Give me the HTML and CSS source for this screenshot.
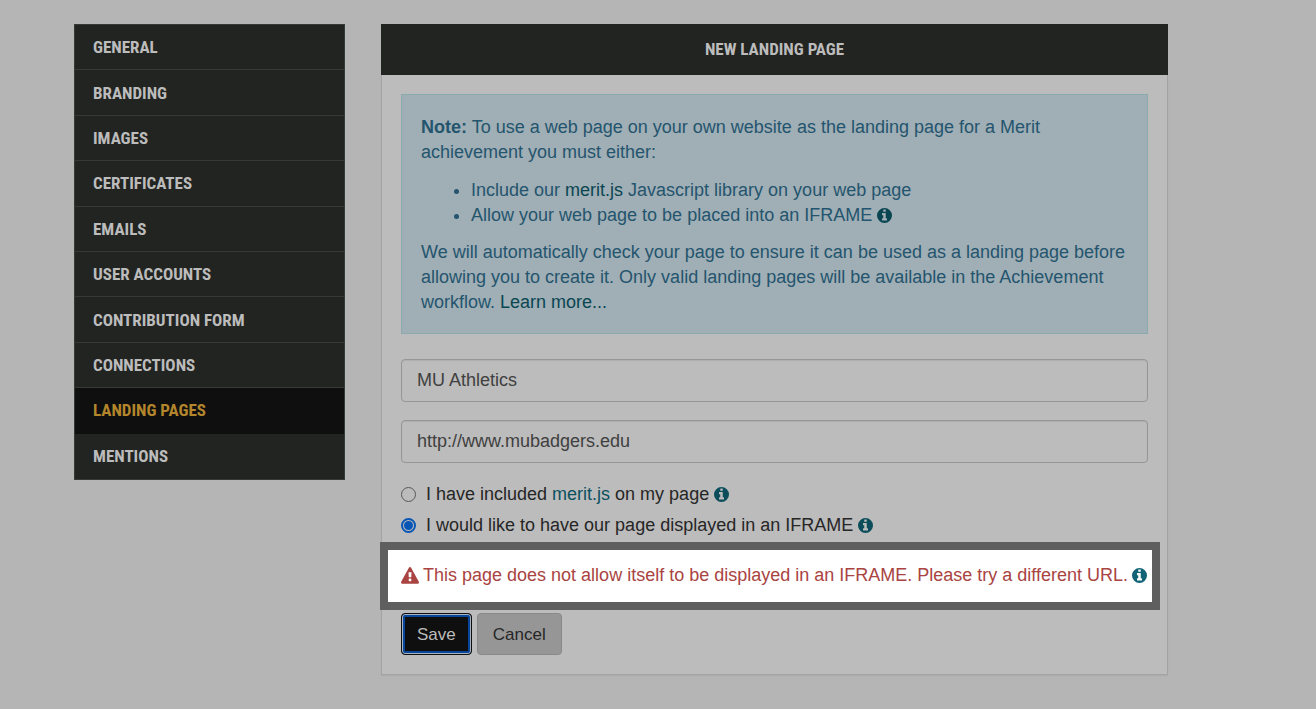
FILE: index.html
```html
<!DOCTYPE html>
<html lang="en">
<head>
    <meta charset="UTF-8">
    <meta name="viewport" content="width=device-width, initial-scale=1.0">
    <title>New Landing Page</title>
    <link rel="stylesheet" href="styles.css">
</head>
<body>
    <svg class="sprite" aria-hidden="true">
        <symbol id="info" viewBox="128 128 1536 1536">
            <path fill-rule="evenodd" d="M896 128a768 768 0 1 0 0 1536a768 768 0 1 0 0-1536zM1152 1376q0 32-32 32H672q-32 0-32-32v-160q0-32 32-32h96V864h-96q-32 0-32-32V672q0-32 32-32h320q32 0 32 32v512h96q32 0 32 32zM1024 480q0 32-32 32H800q-32 0-32-32V320q0-32 32-32h192q32 0 32 32z"/>
        </symbol>
        <symbol id="warning" viewBox="0 0 1792 1792">
            <path d="M1024 1375v-190q0-14-9.500-23.500t-22.500-9.500h-192q-13 0-22.500 9.500t-9.500 23.500v190q0 14 9.500 23.500t22.500 9.500h192q13 0 22.500-9.500t9.500-23.500zm-2-374l18-459q0-12-10-19-13-11-24-11h-220q-11 0-24 11-10 7-10 21l17 457q0 10 10 16.500t24 6.500h185q14 0 23.500-6.500t10.500-16.500zm-14-934l768 1408q35 63-2 126-17 29-46.500 46t-63.500 17h-1536q-34 0-63.500-17t-46.500-46q-37-63-2-126l768-1408q17-31 47-49t65-18 65 18 47 49z"/>
        </symbol>
    </svg>

    <div class="page">
        <nav class="menu">
            <a href="#">GENERAL</a>
            <a href="#">BRANDING</a>
            <a href="#">IMAGES</a>
            <a href="#">CERTIFICATES</a>
            <a href="#">EMAILS</a>
            <a href="#">USER ACCOUNTS</a>
            <a href="#">CONTRIBUTION FORM</a>
            <a href="#">CONNECTIONS</a>
            <a href="#" class="active">LANDING PAGES</a>
            <a href="#">MENTIONS</a>
        </nav>

        <main class="panel">
            <h1>NEW LANDING PAGE</h1>
            <form class="panel-body">
                <div class="note">
                    <p><strong>Note:</strong> To use a web page on your own website as the landing page for a Merit achievement you must either:</p>
                    <ul>
                        <li>Include our <a href="#">merit.js</a> Javascript library on your web page</li>
                        <li>Allow your web page to be placed into an IFRAME <svg class="icon"><use href="#info"/></svg></li>
                    </ul>
                    <p>We will automatically check your page to ensure it can be used as a landing page before allowing you to create it. Only valid landing pages will be available in the Achievement workflow. <a href="#">Learn more...</a></p>
                </div>

                <input type="text" class="field" aria-label="Name" value="MU Athletics">
                <input type="text" class="field" aria-label="URL" value="http://www.mubadgers.edu">

                <div class="choice">
                    <input type="radio" name="method" id="script">
                    <label for="script">I have included <a href="#">merit.js</a> on my page <svg class="icon"><use href="#info"/></svg></label>
                </div>
                <div class="choice">
                    <input type="radio" name="method" id="iframe" checked>
                    <label for="iframe">I would like to have our page displayed in an IFRAME <svg class="icon"><use href="#info"/></svg></label>
                </div>

                <div class="error">
                    <svg class="icon-warning"><use href="#warning"/></svg>
                    <span>This page does not allow itself to be displayed in an IFRAME. Please try a different URL.</span>
                    <svg class="icon"><use href="#info"/></svg>
                </div>

                <div class="actions">
                    <button type="button" class="button save">Save</button>
                    <button type="button" class="button">Cancel</button>
                </div>
            </form>
        </main>
    </div>
</body>
</html>
```
FILE: styles.css
```css
* {
    box-sizing: border-box;
}
body {
    margin: 0;
    font-family: "Liberation Sans", Arial, sans-serif;
    font-size: 18px;
    line-height: 25px;
    background: #b5b5b5;
    color: #262626;
}
a {
    color: #0b5060;
    text-decoration: none;
}
.sprite {
    display: none;
}
.page {
    display: grid;
    grid-template-columns: 271px 1fr;
    align-items: start;
    gap: 36px;
    padding: 24px 148px 24px 74px;
}
.menu,
.panel h1 {
    font-family: "Liberation Sans Narrow", "Roboto Condensed", "Arial Narrow", sans-serif;
    font-size: 17px;
    font-weight: bold;
}
.menu {
    display: grid;
    grid-auto-rows: 1fr;
    min-height: 456px;
    background: #222421;
    border: 1px solid #343a35;
}
.menu a {
    display: flex;
    align-items: center;
    padding: 1px 18px 0;
    color: #bcbcbc;
    border-bottom: 1px solid #343a35;
}
.menu a:last-child {
    border-bottom: none;
}
.menu a.active {
    background: #0f0f0f;
    color: #b4862c;
    border-color: #0f0f0f;
}
.panel h1 {
    margin: 0;
    padding: 13px;
    text-align: center;
    background: #222421;
    color: #bcbcbc;
}
.panel-body {
    padding: 19px;
    background: #bcbcbc;
    border: 1px solid #a3a3a3;
    border-top: none;
    box-shadow: 0 1px 1px #adadad;
}
.note {
    margin-bottom: 25px;
    padding: 20px 19px 18px;
    background: #a0aeb5;
    border: 1px solid #8aabae;
    color: #24556e;
}
.note p {
    margin: 0;
}
.note ul {
    margin: 13px 0 12px;
    padding-left: 50px;
}
.note a,
.note .icon {
    color: #094652;
}
.icon,
.icon-warning {
    width: 15px;
    height: 15px;
    vertical-align: -2px;
    fill: currentColor;
    color: #0b4d5b;
}
.field {
    display: block;
    width: 100%;
    height: 43px;
    margin-bottom: 18px;
    padding: 0 15px;
    font: inherit;
    color: #404040;
    background: #bcbcbc;
    border: 1px solid #969696;
    border-radius: 4px;
    box-shadow: inset 0 1px 1px #afafaf;
}
.choice {
    display: flex;
    align-items: center;
    gap: 10px;
    margin-bottom: 5px;
    line-height: 26px;
}
.choice input {
    appearance: none;
    width: 15px;
    height: 15px;
    margin: 0;
    border: 1px solid #585858;
    border-radius: 50%;
}
.choice input:checked {
    border: 2px solid #0756b5;
    background: #0756b5;
    background-clip: content-box;
    padding: 1px;
}
/* spotlight around the message, wider than the form column */
.error {
    display: flex;
    align-items: center;
    gap: 4px;
    margin: -1px -12px 3px -21px;
    padding: 13px 0 14px 13px;
    border: 8px solid #5f5f5f;
    background: #fff;
    color: #a94442;
}
.error .icon {
    flex: none;
    color: #136377;
}
.error .icon-warning {
    flex: none;
    width: 18px;
    height: 18px;
    color: #a94442;
}
.actions {
    display: flex;
    gap: 5px;
}
.button {
    height: 42px;
    padding: 0 15px;
    font: inherit;
    font-size: 17px;
    color: #262626;
    background: #969696;
    border: 1px solid #898989;
    border-radius: 4px;
    cursor: pointer;
}
.button.save {
    background: #0f0f0f;
    color: #bcbcbc;
    border-color: #0f0f0f;
    box-shadow: inset 0 0 0 1px #a8b4c2, inset 0 0 0 3px #07459a;
}
```
